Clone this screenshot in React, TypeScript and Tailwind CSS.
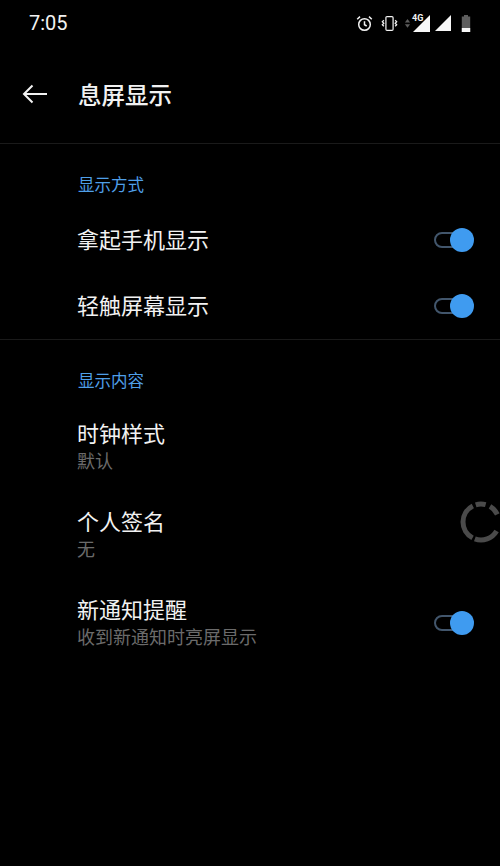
import React from 'react';

const FONT = '"Roboto", "Noto Sans CJK SC", sans-serif';

function Toggle({ className }: { className?: string }) {
  return (
    <div className={`relative w-[40px] h-[24px] shrink-0 ${className ?? ''}`}>
      <div className="absolute left-0 top-[4px] w-[30px] h-[16px] rounded-full border-2 border-[#42566c]" />
      <div className="absolute right-0 top-0 w-[24px] h-[24px] rounded-full bg-[#3f9bf0]" />
    </div>
  );
}

function StatusIcons() {
  return (
    <div className="flex items-center h-[17px]">
      {/* alarm */}
      <svg width="17" height="17" viewBox="0 0 17 17" fill="none" stroke="#f2f2f2" strokeWidth="1.5">
        <circle cx="8.5" cy="9.5" r="5.8" />
        <path d="M8.5 6.2v3.5l2.2 1.3M1.2 4.2 4 1.6M15.8 4.2 13 1.6" />
      </svg>
      {/* vibrate */}
      <svg width="17" height="17" viewBox="0 0 18 17" fill="none" stroke="#f2f2f2" strokeWidth="1.3" className="ml-[8px]">
        <rect x="5.2" y="1.2" width="7.6" height="14.6" rx="1.2" />
        <path d="M3 5 1.4 6.6 3 8.2 1.4 9.8 3 11.4M15 5l1.6 1.6L15 8.2l1.6 1.6L15 11.4" />
      </svg>
      {/* data arrows */}
      <svg width="7" height="9" viewBox="0 0 7 12" fill="#5c5c5c" className="ml-[6px]">
        <path d="M3.5 0 7 4.5H0zM0 7h7l-3.5 4.5z" />
      </svg>
      {/* 4G signal */}
      <div className="relative w-[17px] h-[17px] ml-[2px]">
        <svg width="17" height="17" viewBox="0 0 17 17" fill="#f7f7f7" className="absolute left-0 top-0">
          <path d="M17 0v17H0z" />
        </svg>
        <span className="absolute -left-[1px] -top-[2px] text-[9px] leading-[10px] font-bold text-[#f2f2f2]">4G</span>
      </div>
      {/* signal */}
      <svg width="16" height="16" viewBox="0 0 16 16" fill="#f7f7f7" className="ml-[5px]">
        <path d="M16 0v16H0z" />
      </svg>
      {/* battery */}
      <svg width="10" height="17" viewBox="0 0 10 17" className="ml-[10px]">
        <path d="M3 0h4v1.5h2.2V17H.8V1.5H3z" fill="#5e5e5e" />
        <path d="M.8 13h8.4v4H.8z" fill="#f7f7f7" />
      </svg>
    </div>
  );
}

// arc on the spinner ring, angles clockwise from 12 o'clock
function arc(from: number, to: number) {
  const r = 18;
  const pt = (a: number) => {
    const t = (a * Math.PI) / 180;
    return `${(21 + r * Math.sin(t)).toFixed(2)} ${(21 - r * Math.cos(t)).toFixed(2)}`;
  };
  return `M${pt(from)} A${r} ${r} 0 ${to - from > 180 ? 1 : 0} 1 ${pt(to)}`;
}

function Spinner() {
  return (
    <svg width="40" height="42" viewBox="0 0 40 42" fill="none" stroke="#4a4a4a" strokeWidth="5" className="shrink-0 self-start mt-[10px]">
      <path d={arc(-152, -27)} />
      <path d={arc(120, 200)} />
      <path d={arc(-17, 15)} />
      <path d={arc(30, 65)} />
    </svg>
  );
}

function Row({ title, sub, right, className }: { title: string; sub?: string; right?: React.ReactNode; className?: string }) {
  return (
    <div className={`flex items-center justify-between pl-[77px] ${className ?? ''}`}>
      <div className="flex flex-col">
        <span className="text-[22px] leading-[30px] text-[#f2f2f2]">{title}</span>
        {sub && <span className="text-[18px] leading-[24px] text-[#6b6b6b]">{sub}</span>}
      </div>
      {right}
    </div>
  );
}

export default function App() {
  return (
    <div className="w-[500px] h-[866px] bg-black overflow-hidden" style={{ fontFamily: FONT }}>
      {/* status bar */}
      <div className="h-[46px] flex items-center justify-between pl-[29px] pr-[29px]">
        <span className="text-[20px] leading-none text-[#f2f2f2]">7:05</span>
        <StatusIcons />
      </div>

      {/* toolbar */}
      <div className="h-[98px] flex items-center border-b border-[#1a1a1a]">
        <svg width="26" height="20" viewBox="0 0 26 20" fill="none" stroke="#f2f2f2" strokeWidth="2" className="ml-[22px] -mt-[1px]">
          <path d="M25 10H2M10.5 1.5 2 10l8.5 8.5" />
        </svg>
        <span className="ml-[30px] text-[23.5px] leading-[30px] mt-[2px] font-medium text-[#f2f2f2]">息屏显示</span>
      </div>

      {/* display mode */}
      <div className="h-[196px] border-b border-[#1a1a1a] flex flex-col pt-[31px]">
        <span className="pl-[78px] text-[16.5px] leading-[22px] text-[#4f9fe8]">显示方式</span>
        <Row title="拿起手机显示" right={<Toggle className="-mt-[2px]" />} className="pr-[26px] h-[67px] mt-[10px]" />
        <Row title="轻触屏幕显示" right={<Toggle className="-mt-[2px]" />} className="pr-[26px] h-[65px]" />
      </div>

      {/* display content */}
      <div className="flex flex-col pt-[31px]">
        <span className="pl-[78px] text-[16.5px] leading-[22px] text-[#4f9fe8]">显示内容</span>
        <Row title="时钟样式" sub="默认" className="h-[88px] mt-[10px]" />
        <Row title="个人签名" sub="无" right={<Spinner />} className="h-[88px]" />
        <Row title="新通知提醒" sub="收到新通知时亮屏显示" right={<Toggle />} className="pr-[26px] h-[88px]" />
      </div>
    </div>
  );
}
